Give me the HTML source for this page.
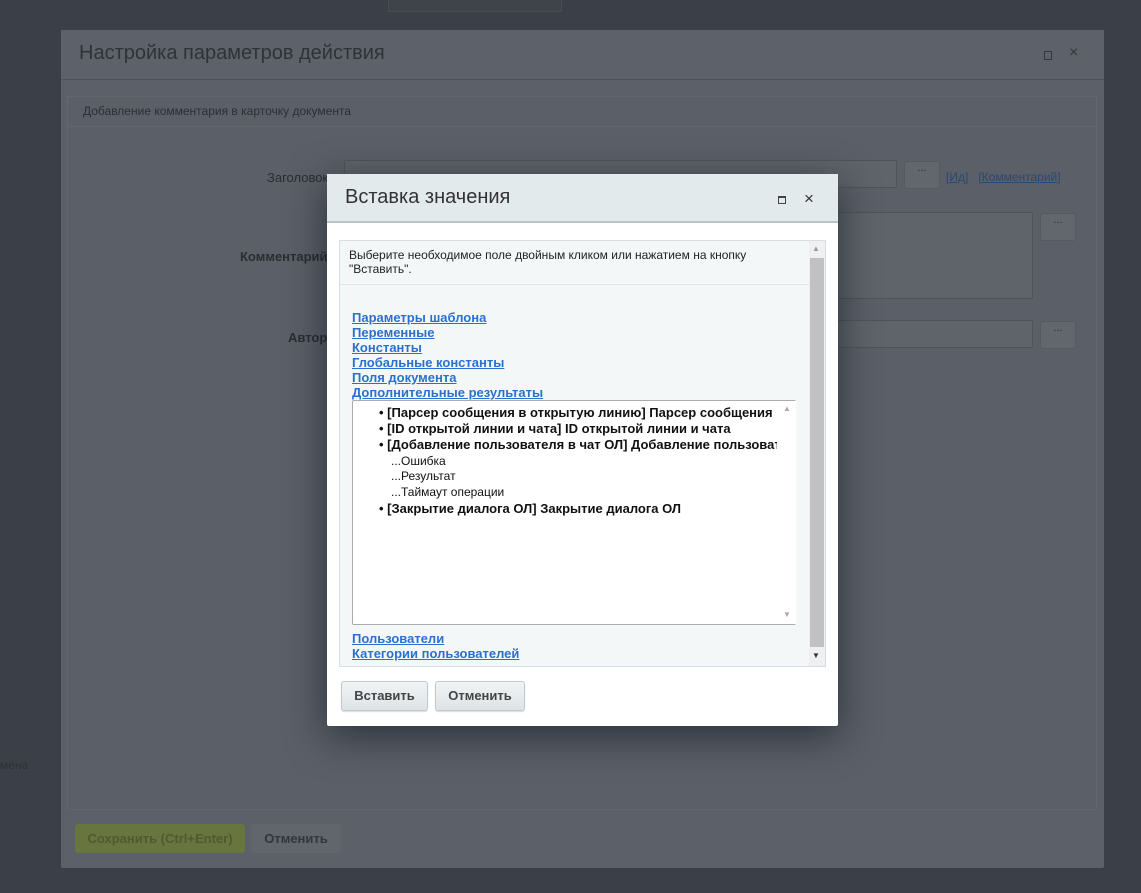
<!DOCTYPE html>
<html><head><meta charset="utf-8"><style>
*{box-sizing:border-box;margin:0;padding:0}
body{width:1141px;height:893px;background:#3b4048;font-family:"Liberation Sans",sans-serif;position:relative;overflow:hidden}
.abs{position:absolute}
.outer{left:61px;top:30px;width:1043px;height:838px;background:#5c6068;border-radius:2px}
.oh{left:0;top:0;width:1043px;height:50px;border-bottom:1px solid #4e5259;background:#5d6169}
.oh span{position:absolute;left:18px;top:12px;font-size:20px;color:#2f3236}
.panel{left:6px;top:66px;width:1030px;height:714px;border:1px solid #62666d;background:#5b5f67}
.ph{height:30px;border-bottom:1px solid #63676e;font-size:12px;color:#2c2f33;padding:7px 15px}
.lbl{font-size:13px;color:#2a2d31}
.inp{background:#5f636a;border:1px solid #50545a;border-radius:2px}
.btn3{background:#62666d;border:1px solid #565a60;border-radius:3px;color:#2c2f33;font-size:11px;text-align:center}
.modal{left:327px;top:174px;width:511px;height:552px;background:#fff;border-radius:2px;box-shadow:0 10px 40px rgba(20,30,40,.7)}
.mh{height:49px;background:#e3eaec;border-bottom:2px solid #bcc3c6}
.mh span{position:absolute;left:18px;top:12px;font-size:20px;color:#333}
.box{left:12px;top:66px;width:487px;height:427px;background:#f3f7f8;border:1px solid #d6e0e4;overflow:hidden}
a{color:#2a70d0;font-size:13px;font-weight:bold;text-decoration:underline;display:block;line-height:15px}
.list{left:12px;top:159px;width:444px;height:225px;background:#fff;border:1px solid #a9acaf;border-radius:2px;font-size:13px;color:#111}
.list div{position:absolute;white-space:nowrap}
.b{font-weight:bold}
.mbtn{top:507px;height:30px;border:1px solid #c2c9cc;border-radius:3px;background:linear-gradient(#f1f4f5,#dde3e6);font-size:13px;font-weight:bold;color:#444;text-align:center;line-height:28px;box-shadow:0 1px 1px rgba(0,0,0,.15)}
</style></head><body>
<div class="abs" style="left:388px;top:0;width:174px;height:12px;border:1px solid #484c53;border-top:0;background:#3f434a"></div>
<div class="abs outer">
 <div class="abs oh"><span>Настройка параметров действия</span>
  <div class="abs" style="left:983px;top:21px;width:8px;height:9px;border:1px solid #33363a"></div>
  <div class="abs" style="left:1008px;top:14px;font-size:16px;color:#33363a">×</div></div>
 <div class="abs panel">
  <div class="ph">Добавление комментария в карточку документа</div>
  <div class="abs lbl" style="left:199px;top:73px">Заголовок</div>
  <div class="abs inp" style="left:276px;top:63px;width:553px;height:28px"></div>
  <div class="abs btn3" style="left:836px;top:64px;width:36px;height:28px">...</div>
  <div class="abs" style="left:878px;top:73px;font-size:12px;color:#254a73">[<u>Ид</u>] &nbsp;&nbsp;[<u>Комментарий</u>]</div>
  <div class="abs lbl" style="left:172px;top:152px;font-weight:bold">Комментарий</div>
  <div class="abs inp" style="left:765px;top:115px;width:200px;height:87px"></div>
  <div class="abs btn3" style="left:972px;top:116px;width:36px;height:28px">...</div>
  <div class="abs lbl" style="left:220px;top:233px;font-weight:bold">Автор</div>
  <div class="abs inp" style="left:765px;top:223px;width:200px;height:28px"></div>
  <div class="abs btn3" style="left:972px;top:224px;width:36px;height:28px">...</div>
 </div>
 <div class="abs" style="left:14px;top:794px;width:170px;height:29px;background:#69753f;border-radius:3px;color:#4e5a30;font-size:13px;font-weight:bold;text-align:center;line-height:29px">Сохранить (Ctrl+Enter)</div>
 <div class="abs" style="left:190px;top:794px;width:90px;height:29px;background:#61656c;border-radius:3px;color:#33363a;font-size:13px;font-weight:bold;text-align:center;line-height:29px">Отменить</div>
</div>
<div class="abs" style="left:0;top:758px;font-size:12px;color:#2d3035">мена</div>
<div class="abs modal">
 <div class="mh"><span>Вставка значения</span>
  <div class="abs" style="left:451px;top:22px;width:8px;height:8px;border:1px solid #444;border-top-width:2px"></div>
  <div class="abs" style="left:477px;top:15px;font-size:17px;color:#333">×</div></div>
 <div class="abs box">
  <div style="font-size:12px;color:#222;padding:7px 9px;line-height:14px;height:44px;border-bottom:1px solid #dde6e9;width:469px">Выберите необходимое поле двойным кликом или нажатием на кнопку "Вставить".</div>
  <div class="abs" style="left:12px;top:69px"><a>Параметры шаблона</a><a>Переменные</a><a>Константы</a><a>Глобальные константы</a><a>Поля документа</a><a>Дополнительные результаты</a></div>
  <div class="abs list">
   <div class="b" style="left:26px;top:4px">• [Парсер сообщения в открытую линию] Парсер сообщения в</div>
   <div class="b" style="left:26px;top:20px">• [ID открытой линии и чата] ID открытой линии и чата</div>
   <div class="b" style="left:26px;top:36px">• [Добавление пользователя в чат ОЛ] Добавление пользоват</div>
   <div style="left:38px;top:53px;font-size:12px">...Ошибка</div>
   <div style="left:38px;top:68px;font-size:12px">...Результат</div>
   <div style="left:38px;top:84px;font-size:12px">...Таймаут операции</div>
   <div class="b" style="left:26px;top:100px">• [Закрытие диалога ОЛ] Закрытие диалога ОЛ</div>
   <div style="left:424px;top:0;width:19px;height:223px;background:#fff"></div>
   <div style="left:430px;top:3px;font-size:8px;color:#aaa">▲</div>
   <div style="left:430px;top:209px;font-size:8px;color:#aaa">▼</div>
  </div>
  <div class="abs" style="left:12px;top:390px"><a>Пользователи</a><a>Категории пользователей</a></div>
  <div class="abs" style="left:469px;top:0;width:16px;height:425px;background:#f0f0f0"></div>
  <div class="abs" style="left:470px;top:17px;width:14px;height:389px;background:#c1c1c1"></div>
  <div class="abs" style="left:472px;top:3px;font-size:8px;color:#999">▲</div>
  <div class="abs" style="left:472px;top:410px;font-size:8px;color:#333">▼</div>
 </div>
 <div class="abs mbtn" style="left:14px;width:87px">Вставить</div>
 <div class="abs mbtn" style="left:108px;width:90px">Отменить</div>
</div>
</body></html>
